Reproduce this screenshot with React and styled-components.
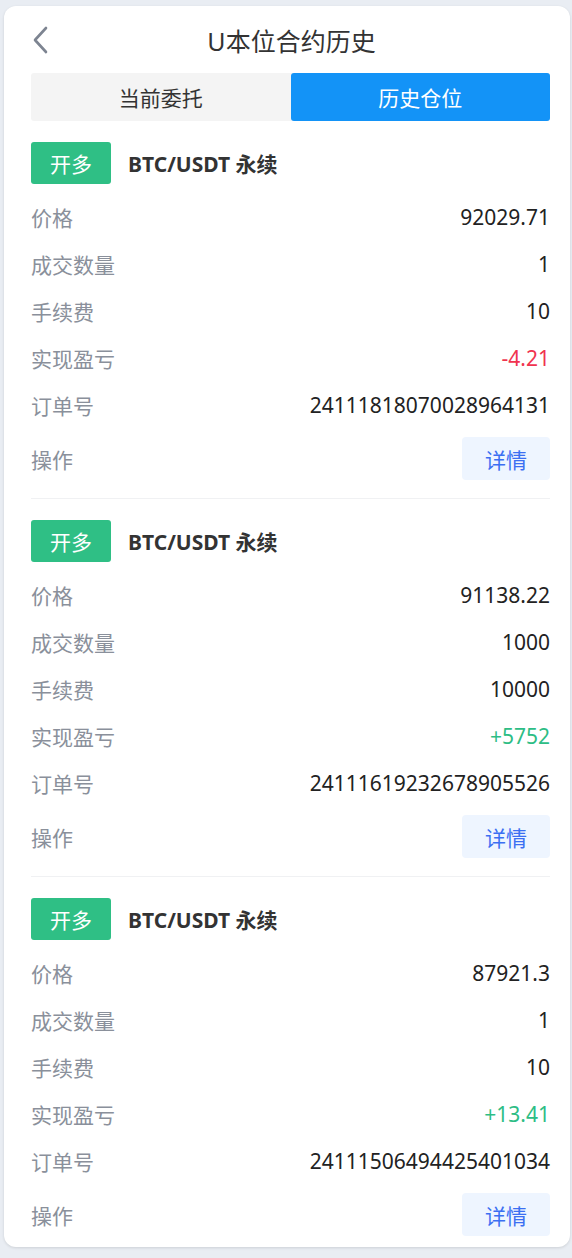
import React from "react";
import styled, { createGlobalStyle } from "styled-components";

const GlobalStyle = createGlobalStyle`
  html, body {
    margin: 0;
    padding: 0;
    background: #e9edf3;
    font-family: "Noto Sans", "Noto Sans CJK SC", sans-serif;
  }
`;

const Page = styled.div`
  padding: 6px 2px 10px 4px;
  min-height: 1242px;
  box-sizing: border-box;
`;

const Card = styled.main`
  background: #fff;
  border-radius: 12px;
  box-shadow: 0 1px 3px rgba(0, 0, 0, 0.12);
  padding: 0 20px 11px 27px;
`;

const Header = styled.header`
  position: relative;
  height: 67px;
  display: flex;
  align-items: center;
  justify-content: center;
`;

const Back = styled.button`
  position: absolute;
  left: 0;
  top: 20px;
  border: 0;
  background: none;
  padding: 0;
  display: flex;
`;

const Title = styled.h1`
  margin: 0;
  font-size: 25px;
  font-weight: 400;
  color: #333;
  padding-left: 2px;
`;

const Tabs = styled.div`
  display: grid;
  grid-template-columns: 1fr 1fr;
  height: 48px;
  background: #f4f4f4;
  border-radius: 3px;
`;

const Tab = styled.div`
  display: flex;
  align-items: center;
  justify-content: center;
  font-size: 21px;
  border-radius: 3px;
  color: ${(p) => (p.$active ? "#fff" : "#333")};
  background: ${(p) => (p.$active ? "#1393f7" : "transparent")};
`;

const Section = styled.section`
  padding: 21px 0 ${(p) => (p.$last ? "0" : "18px")};
  border-bottom: ${(p) => (p.$last ? "none" : "1px solid #f0f1f3")};
`;

const SectionHead = styled.div`
  display: flex;
  align-items: center;
  gap: 17px;
  height: 42px;
  margin-bottom: 9px;
`;

const SideTag = styled.span`
  width: 80px;
  height: 42px;
  border-radius: 3px;
  background: #2fbf85;
  color: #fff;
  font-size: 21px;
  display: flex;
  align-items: center;
  justify-content: center;
`;

const Symbol = styled.span`
  font-size: 21px;
  font-weight: 700;
  color: #333;
`;

const Row = styled.div`
  display: flex;
  align-items: center;
  justify-content: space-between;
  height: 47px;
`;

const Label = styled.span`
  font-size: 21px;
  color: #8a909b;
`;

const Value = styled.span`
  font-size: 21px;
  color: ${(p) => p.$color || "#222"};
`;

const ActionRow = styled.div`
  display: flex;
  align-items: center;
  justify-content: space-between;
  padding-top: 9px;
`;

const DetailButton = styled.button`
  width: 88px;
  height: 43px;
  border: 0;
  border-radius: 4px;
  background: #eef5ff;
  color: #3b6ff2;
  font-size: 21px;
  font-family: inherit;
`;

const orders = [
  { price: "92029.71", qty: "1", fee: "10", pnl: "-4.21", id: "24111818070028964131" },
  { price: "91138.22", qty: "1000", fee: "10000", pnl: "+5752", id: "24111619232678905526" },
  { price: "87921.3", qty: "1", fee: "10", pnl: "+13.41", id: "24111506494425401034" },
];

function pnlColor(v) {
  return v.startsWith("-") ? "#f0334f" : "#2dbd85";
}

export default function App() {
  return (
    <Page>
      <GlobalStyle />
      <Card>
        <Header>
          <Back>
            <svg width="18" height="28" viewBox="0 0 18 28" fill="none">
              <path d="M15 2 L4 14 L15 26" stroke="#7d8491" strokeWidth="2.6" strokeLinecap="round" strokeLinejoin="round" />
            </svg>
          </Back>
          <Title>U本位合约历史</Title>
        </Header>
        <Tabs>
          <Tab>当前委托</Tab>
          <Tab $active>历史仓位</Tab>
        </Tabs>
        {orders.map((o, i) => (
          <Section key={o.id} $last={i === orders.length - 1}>
            <SectionHead>
              <SideTag>开多</SideTag>
              <Symbol>BTC/USDT 永续</Symbol>
            </SectionHead>
            <Row>
              <Label>价格</Label>
              <Value>{o.price}</Value>
            </Row>
            <Row>
              <Label>成交数量</Label>
              <Value>{o.qty}</Value>
            </Row>
            <Row>
              <Label>手续费</Label>
              <Value>{o.fee}</Value>
            </Row>
            <Row>
              <Label>实现盈亏</Label>
              <Value $color={pnlColor(o.pnl)}>{o.pnl}</Value>
            </Row>
            <Row>
              <Label>订单号</Label>
              <Value>{o.id}</Value>
            </Row>
            <ActionRow>
              <Label>操作</Label>
              <DetailButton>详情</DetailButton>
            </ActionRow>
          </Section>
        ))}
      </Card>
    </Page>
  );
}
